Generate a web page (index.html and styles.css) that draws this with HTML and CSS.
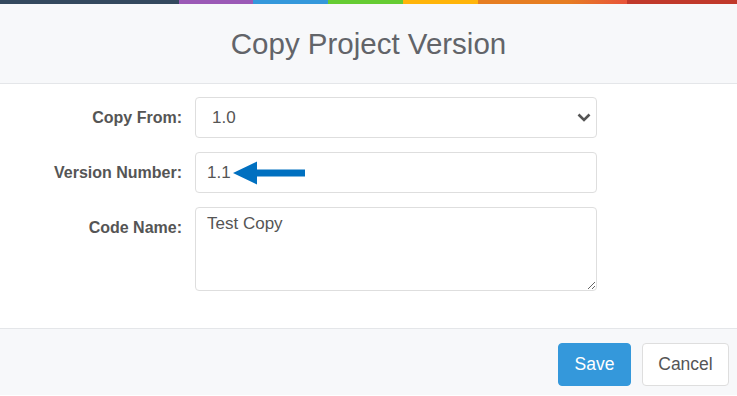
FILE: index.html
```html
<!DOCTYPE html>
<html lang="en">
<head>
    <meta charset="UTF-8">
    <meta name="viewport" content="width=device-width, initial-scale=1.0">
    <title>Copy Project Version</title>
    <link rel="stylesheet" href="styles.css">
</head>
<body>
    <div class="topbar">
        <span class="seg seg-dark"></span>
        <span class="seg seg-purple"></span>
        <span class="seg seg-blue"></span>
        <span class="seg seg-green"></span>
        <span class="seg seg-yellow"></span>
        <span class="seg seg-orange"></span>
        <span class="seg seg-red"></span>
    </div>

    <div class="modal">
        <div class="modal-header">
            <h1 class="modal-title">Copy Project Version</h1>
        </div>

        <form class="modal-body">
            <label class="form-label" for="copyFrom">Copy From:</label>
            <div class="field">
                <select class="form-control form-select" id="copyFrom">
                    <option>1.0</option>
                </select>
                <svg class="select-caret" width="14" height="9" viewBox="0 0 14 9">
                    <path d="M1.5 1.5 L7 7 L12.5 1.5" fill="none" stroke="#555" stroke-width="2.6"/>
                </svg>
            </div>

            <label class="form-label" for="versionNumber">Version Number:</label>
            <div class="field">
                <input class="form-control" id="versionNumber" type="text" value="1.1">
                <svg class="pointer-arrow" width="72" height="24" viewBox="0 0 72 24">
                    <path d="M0 12 L24 0.5 L24 8.5 L72 8.5 L72 15.5 L24 15.5 L24 23.5 Z" fill="#0070c0"/>
                </svg>
            </div>

            <label class="form-label" for="codeName">Code Name:</label>
            <textarea class="form-control form-textarea" id="codeName">Test Copy</textarea>
        </form>

        <div class="modal-footer">
            <button class="btn btn-primary" type="button">Save</button>
            <button class="btn btn-default" type="button">Cancel</button>
        </div>
    </div>
</body>
</html>
```

FILE: styles.css
```css
body {
    margin: 0;
    font-family: "Liberation Sans", Arial, sans-serif;
    background-color: #fff;
    color: #555;
}

.topbar {
    display: grid;
    grid-template-columns: 179fr 74fr 75fr 75fr 75fr 149fr 110fr;
    height: 4px;
}

.seg-dark { background-color: #34495e; }
.seg-purple { background-color: #9b59b6; }
.seg-blue { background-color: #3498db; }
.seg-green { background-color: #66cc33; }
.seg-yellow { background-color: #ffb50a; }
.seg-orange { background: linear-gradient(90deg, #e67e22 0%, #e67e22 60%, #e8533a 100%); }
.seg-red { background-color: #c0392b; }

.modal-header {
    height: 79px;
    display: flex;
    align-items: center;
    justify-content: center;
    background-color: #f7f8fa;
    border-bottom: 1px solid #e4e6e9;
}

.modal-title {
    margin: 0;
    font-size: 29.5px;
    font-weight: normal;
    color: #626469;
}

.modal-body {
    display: grid;
    grid-template-columns: 182px 402px;
    column-gap: 13px;
    row-gap: 14px;
    padding: 13px 0 37px 0;
}

.form-label {
    justify-self: end;
    align-self: start;
    line-height: 41px;
    font-size: 16px;
    font-weight: bold;
    color: #555;
}

.field {
    position: relative;
}

.form-control {
    display: block;
    box-sizing: border-box;
    width: 100%;
    height: 41px;
    margin: 0;
    padding: 0 11px;
    border: 1px solid #dedede;
    border-radius: 4px;
    background-color: #fff;
    font-family: inherit;
    font-size: 17px;
    color: #555;
}

.form-select {
    appearance: none;
    -webkit-appearance: none;
    padding-left: 16px;
}

.select-caret {
    position: absolute;
    right: 6px;
    top: 16px;
}

.pointer-arrow {
    position: absolute;
    left: 38px;
    top: 9px;
}

.form-textarea {
    height: 84px;
    padding: 6px 11px;
    resize: vertical;
}

.modal-footer {
    display: flex;
    justify-content: flex-end;
    gap: 11px;
    height: 67px;
    box-sizing: border-box;
    padding: 14px 8px 0 0;
    background-color: #f7f8fa;
    border-top: 1px solid #e4e6e9;
}

.btn {
    height: 43px;
    padding: 0;
    border-radius: 4px;
    font-family: inherit;
    font-size: 17.5px;
    cursor: pointer;
}

.btn-primary {
    width: 73px;
    border: 1px solid #3498db;
    background-color: #3498db;
    color: #fff;
}

.btn-default {
    width: 87px;
    border: 1px solid #dedede;
    background-color: #fff;
    color: #555;
}
```
